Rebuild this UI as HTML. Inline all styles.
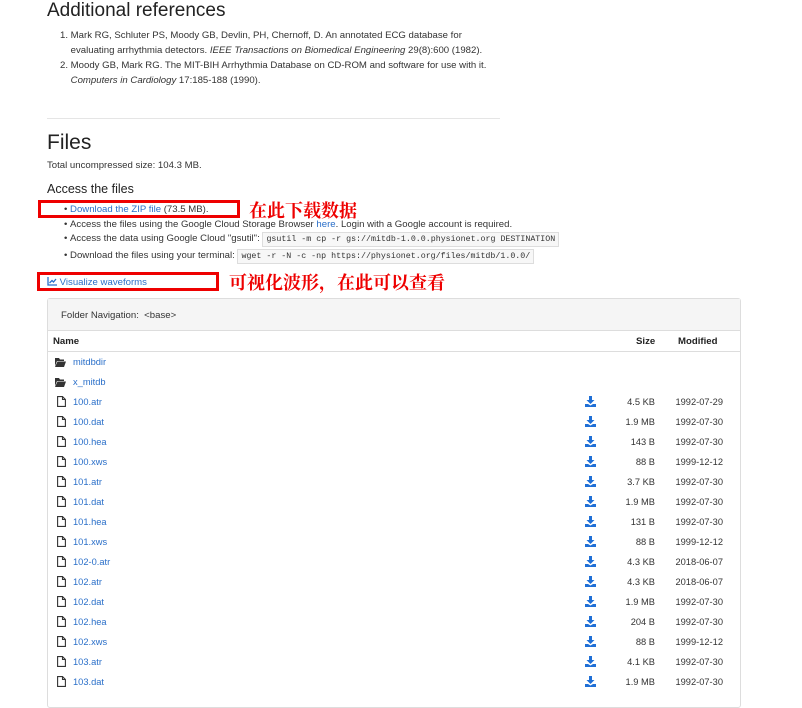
<!DOCTYPE html>
<html><head><meta charset="utf-8"><style>
*{margin:0;padding:0;box-sizing:border-box}
body{width:802px;height:696px;background:#fff;font-family:"Liberation Sans",sans-serif;color:#333;position:relative;overflow:hidden;font-size:9.6px}
.a{position:absolute;white-space:nowrap}
.l{color:#2a6fc9}
code{font-family:"Liberation Mono",monospace;font-size:8.3px;background:#f7f7f7;border:1px solid #ddd;padding:2px 3px;color:#333}
.red{color:#e00;font-family:"Liberation Serif","Noto Serif CJK SC",serif;font-weight:bold;font-size:18px}
.box{position:absolute;border:3px solid #e00}
.row{position:absolute;left:47px;width:693px;height:20px;font-size:9.3px}
.row .n{position:absolute;left:26px;top:5px;color:#2a6fc9}
.row .s{position:absolute;right:85px;top:5px}
.row .m{position:absolute;right:17px;top:5px}
.row .d{position:absolute;left:538px;top:4px}
.row .fi{position:absolute;left:10px;top:4px}
</style></head><body>
<div class="a" style="left:47px;top:0px;font-size:19px;color:#222">Additional references</div>
<div class="a" style="left:60px;top:28px;line-height:15px">1. Mark RG, Schluter PS, Moody GB, Devlin, PH, Chernoff, D. An annotated ECG database for<br>&nbsp;&nbsp;&nbsp;&nbsp;evaluating arrhythmia detectors. <i>IEEE Transactions on Biomedical Engineering</i> 29(8):600 (1982).<br>2. Moody GB, Mark RG. The MIT-BIH Arrhythmia Database on CD-ROM and software for use with it.<br>&nbsp;&nbsp;&nbsp;&nbsp;<i>Computers in Cardiology</i> 17:185-188 (1990).</div>
<div class="a" style="left:47px;top:118px;width:453px;height:1px;background:#e5e5e5"></div>
<div class="a" style="left:47px;top:131px;font-size:21px;color:#222">Files</div>
<div class="a" style="left:47px;top:160px">Total uncompressed size: 104.3 MB.</div>
<div class="a" style="left:47px;top:182px;font-size:12.5px;color:#222">Access the files</div>
<div class="a" style="left:64px;top:204px">•&nbsp;<span class="l">Download the ZIP file</span> (73.5 MB).</div>
<div class="a" style="left:64px;top:219px">•&nbsp;Access the files using the Google Cloud Storage Browser <span class="l">here</span>. Login with a Google account is required.</div>
<div class="a" style="left:64px;top:233px">•&nbsp;Access the data using Google Cloud "gsutil": <code>gsutil -m cp -r gs://mitdb-1.0.0.physionet.org DESTINATION</code></div>
<div class="a" style="left:64px;top:250px">•&nbsp;Download the files using your terminal: <code>wget -r -N -c -np https://physionet.org/files/mitdb/1.0.0/</code></div>
<div class="a l" style="left:47px;top:277px"><svg width="10" height="9" viewBox="0 0 10 9" style="vertical-align:-1px"><path d="M1 0V8H10" stroke="#2a6fc9" stroke-width="1.3" fill="none"/><path d="M2.5 6L5 3.5L6.5 5L9 2" stroke="#2a6fc9" stroke-width="1.3" fill="none"/></svg> Visualize waveforms</div>
<div class="box" style="left:38px;top:200px;width:202px;height:18px"></div>
<div class="box" style="left:37px;top:272px;width:182px;height:19px"></div>
<div class="a red" style="left:249px;top:197px">在此下载数据</div>
<div class="a red" style="left:229px;top:269px">可视化波形，在此可以查看</div>
<div class="a" style="left:47px;top:298px;width:694px;height:410px;border:1px solid #ddd;border-radius:3px"></div>
<div class="a" style="left:48px;top:299px;width:692px;height:32px;background:#f5f5f5;border-bottom:1px solid #ddd"></div>
<div class="a" style="left:61px;top:310px">Folder Navigation: &nbsp;&lt;base&gt;</div>
<div class="a" style="left:53px;top:336px;font-weight:bold;color:#222">Name</div>
<div class="a" style="left:636px;top:336px;font-weight:bold;color:#222">Size</div>
<div class="a" style="left:678px;top:336px;font-weight:bold;color:#222">Modified</div>
<div class="a" style="left:48px;top:351px;width:692px;height:1px;background:#ddd"></div>
<div class="row" style="top:352px"><svg class="fi" width="11" height="9" viewBox="0 0 11 9" style="left:8px;top:6px"><path d="M0 0H4L5 1.5H9V3H2L0 8Z M2.5 3.5H11L9 9H0Z" fill="#333"/></svg><span class="n">mitdbdir</span></div>
<div class="row" style="top:372px"><svg class="fi" width="11" height="9" viewBox="0 0 11 9" style="left:8px;top:6px"><path d="M0 0H4L5 1.5H9V3H2L0 8Z M2.5 3.5H11L9 9H0Z" fill="#333"/></svg><span class="n">x_mitdb</span></div>
<div id="rows"></div>
<script>
var d=[["100.atr","4.5 KB","1992-07-29"],["100.dat","1.9 MB","1992-07-30"],["100.hea","143 B","1992-07-30"],["100.xws","88 B","1999-12-12"],["101.atr","3.7 KB","1992-07-30"],["101.dat","1.9 MB","1992-07-30"],["101.hea","131 B","1992-07-30"],["101.xws","88 B","1999-12-12"],["102-0.atr","4.3 KB","2018-06-07"],["102.atr","4.3 KB","2018-06-07"],["102.dat","1.9 MB","1992-07-30"],["102.hea","204 B","1992-07-30"],["102.xws","88 B","1999-12-12"],["103.atr","4.1 KB","1992-07-30"],["103.dat","1.9 MB","1992-07-30"]];
var h="";d.forEach(function(r,i){h+='<div class="row" style="top:'+(392+i*20)+'px"><svg class="fi" width="9" height="11" viewBox="0 0 9 11"><path d="M0.6 0.6H5.5L8.4 3.5V10.4H0.6Z M5.5 0.6V3.5H8.4" stroke="#333" stroke-width="1.1" fill="none"/></svg><span class="n">'+r[0]+'</span><svg class="d" width="11" height="11" viewBox="0 0 11 11"><path d="M4 0H7V4H9.5L5.5 8L1.5 4H4Z M0 8H3L5.5 9.5L8 8H11V11H0Z" fill="#1f6fd6"/></svg><span class="s">'+r[1]+'</span><span class="m">'+r[2]+'</span></div>';});
document.getElementById("rows").innerHTML=h;
</script>
</body></html>
